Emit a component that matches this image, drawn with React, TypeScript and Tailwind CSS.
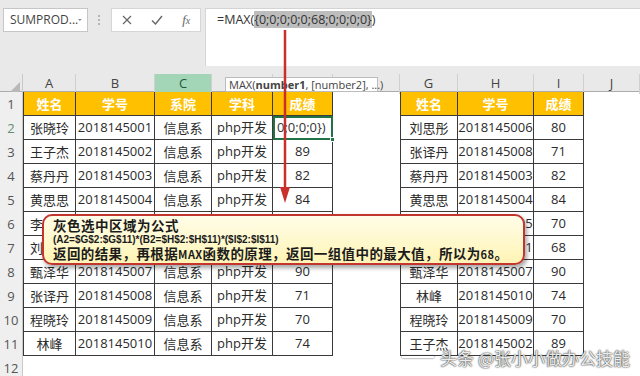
import React from "react";

const cjk = "font-['Noto_Sans_CJK_SC',sans-serif]";
const num = "font-['Open_Sans','Noto_Sans_CJK_SC',sans-serif]";

const cols = "grid grid-cols-[23px_53px_79px_57px_61px_60px_67px_58px_76px_50px_56px]";

const leftRows = [
  ["张晓玲", "2018145001", ""],
  ["王子杰", "2018145002", "89"],
  ["蔡丹丹", "2018145003", "82"],
  ["黄思思", "2018145004", "84"],
  ["李思琪", "2018145005", "70"],
  ["刘思彤", "2018145006", "80"],
  ["甄泽华", "2018145007", "90"],
  ["张译丹", "2018145008", "71"],
  ["程晓玲", "2018145009", "70"],
  ["林峰", "2018145010", "74"],
];

const rightRows = [
  ["刘思彤", "2018145006", "80"],
  ["张译丹", "2018145008", "71"],
  ["蔡丹丹", "2018145003", "82"],
  ["黄思思", "2018145004", "84"],
  ["李思琪", "2018145005", "70"],
  ["张晓玲", "2018145001", "68"],
  ["甄泽华", "2018145007", "90"],
  ["林峰", "2018145010", "74"],
  ["程晓玲", "2018145009", "70"],
  ["王子杰", "2018145002", "89"],
];

const border = "border-r border-b border-[#3a3a3a]";

function RowNum({ n, active }: { n: number; active?: boolean }) {
  return (
    <div
      className={`flex items-end justify-center pb-[2px] border-r border-[#c9c9c9] bg-[#efefef] text-[13px] ${num} ${
        active ? "text-[#5f8f70]" : "text-[#555]"
      }`}
    >
      {n}
    </div>
  );
}

function Td({
  children,
  first,
  font = cjk,
  className = "",
}: {
  children?: React.ReactNode;
  first?: boolean;
  font?: string;
  className?: string;
}) {
  return (
    <div
      className={`flex items-center justify-center overflow-hidden whitespace-nowrap text-[13px] text-[#2b2b2b] ${border} ${
        first ? "border-l" : ""
      } ${font} ${className}`}
    >
      {children}
    </div>
  );
}

function Th({ children, first }: { children: React.ReactNode; first?: boolean }) {
  return (
    <div
      className={`flex items-center justify-center bg-[#ffc000] text-[13px] font-bold text-white ${border} ${
        first ? "border-l" : ""
      } ${cjk}`}
    >
      {children}
    </div>
  );
}

function Php() {
  return (
    <span>
      <span className={num}>php</span>开发
    </span>
  );
}

export default function App() {
  return (
    <div className="relative h-[376px] w-[640px] overflow-hidden bg-white">
      {/* formula bar */}
      <div className="flex h-[74px] bg-[#e9e9e9] pt-2">
        <div className="flex h-[24px] w-[205px] shrink-0 items-center">
          <div
            className={`ml-[3px] flex h-[24px] w-[85px] items-center justify-between border border-[#c6c6c6] bg-white pl-[6px] pr-[5px] text-[12px] text-[#444] ${num}`}
          >
            <span>SUMPROD...</span>
            <svg width="7" height="4" viewBox="0 0 7 4">
              <path d="M0 0H7L3.5 4Z" fill="#888" />
            </svg>
          </div>
          <div className="ml-[10px] flex flex-col gap-[2px]">
            <span className="h-[2px] w-[2px] bg-[#b5b5b5]" />
            <span className="h-[2px] w-[2px] bg-[#b5b5b5]" />
            <span className="h-[2px] w-[2px] bg-[#b5b5b5]" />
          </div>
          <div className="ml-[11px] flex h-[24px] w-[90px] items-center justify-around border border-[#d6d6d6] bg-white text-[#666]">
            <svg width="10" height="10" viewBox="0 0 10 10">
              <path d="M1 1L9 9M9 1L1 9" stroke="#666" strokeWidth="1.2" />
            </svg>
            <svg width="12" height="10" viewBox="0 0 12 10">
              <path d="M1 5.5L4.5 9L11 1" stroke="#666" strokeWidth="1.4" fill="none" />
            </svg>
            <span className="font-['Liberation_Serif',serif] text-[13px] italic">
              f<span className="text-[10px]">x</span>
            </span>
          </div>
        </div>
        <div
          className={`h-[58px] flex-1 border-l border-t border-[#d4d4d4] bg-white pl-[11px] pt-[2px] text-[12.5px] text-[#333] ${num}`}
        >
          =MAX(<span className="bg-[#bdbdbd]">{"{0;0;0;0;0;68;0;0;0;0}"}</span>)
        </div>
      </div>

      {/* column headers */}
      <div className={`${cols} h-[18px] border-b border-[#ababab] bg-[#e9e9e9] text-[13px] text-[#444] ${num}`}>
        <div className="flex items-end justify-end border-r border-[#c9c9c9] p-[2px]">
          <svg width="10" height="10" viewBox="0 0 10 10">
            <path d="M10 0V10H0Z" fill="#b9b9b9" />
          </svg>
        </div>
        {["A", "B", "C", "D", "E", "F", "G", "H", "I", "J"].map((c) => (
          <div
            key={c}
            className={`flex items-center justify-center border-r border-[#d0d0d0] ${
              c === "C" ? "bg-[#a3d6b6] text-[#1f5a38]" : ""
            }`}
          >
            {c}
          </div>
        ))}
      </div>

      {/* header row */}
      <div className={`${cols} h-[24px]`}>
        <RowNum n={1} />
        <Th first>姓名</Th>
        <Th>学号</Th>
        <Th>系院</Th>
        <Th>学科</Th>
        <Th>成绩</Th>
        <div />
        <Th first>姓名</Th>
        <Th>学号</Th>
        <Th>成绩</Th>
        <div />
      </div>

      {leftRows.map((r, i) => {
        const rr = rightRows[i];
        return (
          <div key={i} className={`${cols} h-[24px]`}>
            <RowNum n={i + 2} active={i === 0} />
            <Td first>{r[0]}</Td>
            <Td font={num}>{r[1]}</Td>
            <Td>信息系</Td>
            <Td>
              <Php />
            </Td>
            {i === 0 ? (
              <div
                className={`relative flex items-center whitespace-nowrap border-2 border-[#217346] pl-[2px] text-[13px] text-[#333] ${num}`}
              >
                0;0;0;0{"})"}
                <span className="absolute -bottom-[4px] -right-[4px] h-[5px] w-[5px] border border-white bg-[#217346]" />
              </div>
            ) : (
              <Td font={num}>{r[2]}</Td>
            )}
            <div />
            <Td first>{rr[0]}</Td>
            <Td font={num}>{rr[1]}</Td>
            <Td font={num}>{rr[2]}</Td>
            <div />
          </div>
        );
      })}

      <div className={`${cols} h-[24px]`}>
        <RowNum n={12} />
      </div>

      {/* function tooltip */}
      <div
        className={`absolute left-[225px] top-[77px] h-[15px] w-[153px] whitespace-nowrap border border-[#bcbcbc] bg-white pl-[3px] text-[11px] leading-[13px] text-[#444] ${num}`}
      >
        MAX(<b>number1</b>, [number2], ...)
      </div>

      {/* red arrow */}
      <svg className="absolute left-[279px] top-[30px]" width="12" height="175" viewBox="0 0 12 175">
        <line x1="6" y1="0" x2="6" y2="160" stroke="#c9302c" strokeWidth="2.5" />
        <polygon points="1,157 11,157 6,173" fill="#c9302c" />
      </svg>

      {/* callout */}
      <div
        className={`absolute left-[42px] top-[214px] flex h-[51px] w-[483px] flex-col justify-center rounded-[10px] border-2 border-[#c2362f] bg-gradient-to-b from-[#fffde8] to-[#fff4b4] pl-[9px] font-bold leading-none text-[#1b1b1b] shadow-[2px_3px_4px_rgba(0,0,0,0.35)] ${cjk}`}
      >
        <div className="text-[13.5px] tracking-[0.5px]">灰色选中区域为公式</div>
        <div className="mt-[3px] font-['Liberation_Sans',sans-serif] text-[10px]">
          (A2=$G$2:$G$11)*(B2=$H$2:$H$11)*($I$2:$I$11)
        </div>
        <div className="mt-[2px] text-[13.5px] tracking-[0.4px]">
          返回的结果，再根据<span className="text-[11px]">MAX</span>函数的原理，返回一组值中的最大值，所以为
          <span className="text-[11px]">68</span>。
        </div>
      </div>

      {/* watermark */}
      <div
        className={`absolute bottom-[6px] right-[10px] flex items-center gap-[6px] text-[17px] text-white/90 [text-shadow:0_0_2px_#333,0_0_1px_#333] ${cjk}`}
      >
        <span className="h-[2px] w-[32px] bg-white/90 shadow-[0_0_2px_#333]" />
        <span>头条 @张小小做办公技能</span>
      </div>
    </div>
  );
}
